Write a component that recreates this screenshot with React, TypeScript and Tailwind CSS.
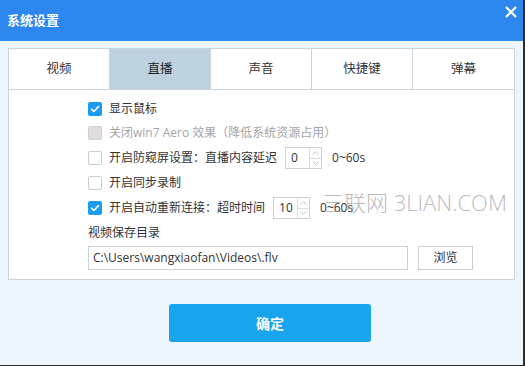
import React from "react";

const font = { fontFamily: '"Open Sans", "Noto Sans CJK SC", sans-serif' };

function Check({ checked, disabled }: { checked?: boolean; disabled?: boolean }) {
  if (checked) {
    return (
      <span className="flex h-[14px] w-[14px] shrink-0 items-center justify-center rounded-[2px] bg-[#1a9df0]">
        <svg width="10" height="10" viewBox="0 0 10 10" fill="none">
          <path d="M1.5 5.2l2.3 2.3L8.5 2.6" stroke="#fff" strokeWidth="1.6" strokeLinecap="round" strokeLinejoin="round" />
        </svg>
      </span>
    );
  }
  return (
    <span
      className={
        disabled
          ? "h-[14px] w-[14px] shrink-0 rounded-[2px] border border-[#d4cfcf] bg-[#e2dddd]"
          : "h-[14px] w-[14px] shrink-0 rounded-[2px] border border-[#c9ced3] bg-white"
      }
    />
  );
}

function Spin({ value }: { value: string }) {
  return (
    <span className="flex h-[22px] w-[37px] border border-[#c8d0d8] bg-white">
      <span className="flex-1 pl-[5px] text-[12px] leading-[20px] text-[#333]">{value}</span>
      <span className="flex w-[12px] flex-col border-l border-[#d6dce2]">
        <span className="flex flex-1 items-center justify-center border-b border-[#d6dce2]">
          <svg width="7" height="4" viewBox="0 0 7 4">
            <path d="M0.5 3.5L3.5 0.5L6.5 3.5" stroke="#b8c0c8" fill="none" />
          </svg>
        </span>
        <span className="flex flex-1 items-center justify-center">
          <svg width="7" height="4" viewBox="0 0 7 4">
            <path d="M0.5 0.5L3.5 3.5L6.5 0.5" stroke="#b8c0c8" fill="none" />
          </svg>
        </span>
      </span>
    </span>
  );
}

const tabs = ["视频", "直播", "声音", "快捷键", "弹幕"];

export default function App() {
  return (
    <div className="h-[366px] w-[525px] overflow-hidden bg-[#2b2b2b]" style={font}>
      <div className="relative flex h-[365px] w-[523px] flex-col bg-[#eef6fd]">
        <div className="flex h-[41px] shrink-0 items-center justify-between bg-[#2e86ef] pl-[7px] pr-[6px]">
          <span className="text-[13px] font-bold text-white">系统设置</span>
          <svg width="12" height="12" viewBox="0 0 12 12" className="-mt-[17px]">
            <path d="M1 1L11 11M11 1L1 11" stroke="#fff" strokeWidth="2.2" />
          </svg>
        </div>

        <div className="px-[8px] pt-[7px]">
          <div className="w-[507px] border border-[#c9d4dd] bg-white">
            <div className="grid h-[41px] grid-cols-5 border-b border-[#c9d4dd]">
              {tabs.map((t, i) => (
                <div
                  key={t}
                  className={
                    (i === 1 ? "bg-[#bdd1df] text-[#222] " : "text-[#333] ") +
                    (i < 4 ? "border-r border-[#c9d4dd] " : "") +
                    "flex items-center justify-center text-[12.5px]"
                  }
                >
                  {t}
                </div>
              ))}
            </div>

            <div className="flex flex-col pb-[9px] pl-[79px] pt-[7px] text-[12px] text-[#333]">
              <div className="flex h-[24px] items-center gap-[7px]">
                <Check checked />
                <span>显示鼠标</span>
              </div>
              <div className="flex h-[24px] items-center gap-[7px]">
                <Check disabled />
                <span className="text-[#a5a5a5]">关闭win7 Aero 效果（降低系统资源占用）</span>
              </div>
              <div className="flex h-[26px] items-center gap-[7px]">
                <Check />
                <span>开启防窥屏设置：直播内容延迟</span>
                <span className="ml-[1px] flex items-center gap-[10px]">
                  <Spin value="0" />
                  <span>0~60s</span>
                </span>
              </div>
              <div className="flex h-[24px] items-center gap-[7px]">
                <Check />
                <span>开启同步录制</span>
              </div>
              <div className="flex h-[26px] items-center gap-[7px]">
                <Check checked />
                <span>开启自动重新连接：超时时间</span>
                <span className="ml-[1px] flex items-center gap-[10px]">
                  <Spin value="10" />
                  <span>0~60s</span>
                </span>
              </div>
              <div className="flex h-[24px] items-center">
                <span>视频保存目录</span>
              </div>
              <div className="mt-[1px] flex items-center gap-[10px]">
                <div className="flex h-[24px] w-[320px] items-center border border-[#c8d0d8] bg-white pl-[4px] text-[12px]">
                  C:\Users\wangxiaofan\Videos\.flv
                </div>
                <button className="h-[24px] w-[55px] border border-[#c8d0d8] bg-white text-[12px] text-[#333]">
                  浏览
                </button>
              </div>
            </div>
          </div>
        </div>

        <div className="pl-[169px] pt-[24px]">
          <button className="h-[38px] w-[202px] rounded-[3px] bg-[#19a4ee] text-[14px] font-bold text-white">
            确定
          </button>
        </div>

        <div className="pointer-events-none absolute left-[322px] top-[191px] whitespace-nowrap text-[22px] font-light leading-none text-[#9a9a9a]/70">
          三联网 3LIAN.COM
        </div>
      </div>
    </div>
  );
}
